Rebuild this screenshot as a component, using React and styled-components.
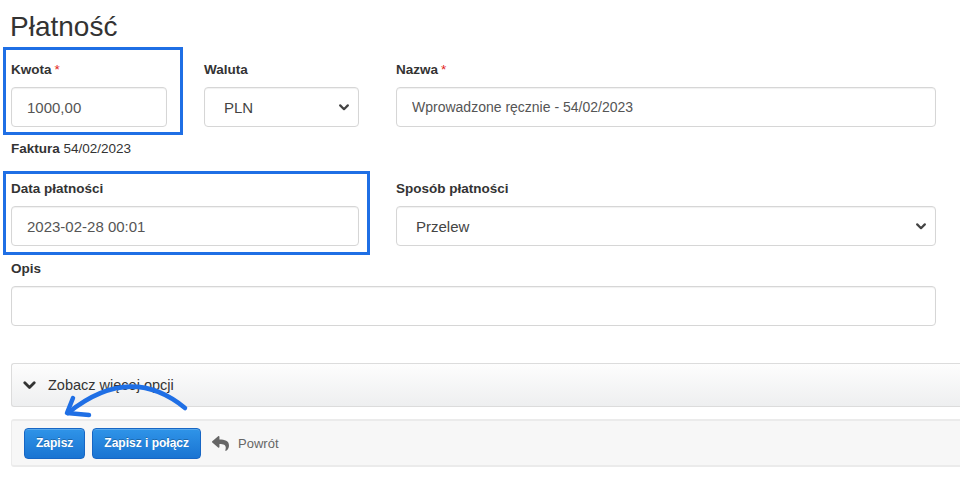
import React from "react";
import styled, { createGlobalStyle } from "styled-components";
import { FaReply } from "react-icons/fa";

const GlobalStyle = createGlobalStyle`
  html, body { margin: 0; padding: 0; background: #fff; overflow: hidden; }
  body { font-family: "Liberation Sans", Arial, sans-serif; color: #333; }
  * { box-sizing: border-box; }
`;

const chevron = (color) =>
  `url("data:image/svg+xml,%3Csvg xmlns='http://www.w3.org/2000/svg' width='10' height='7' viewBox='0 0 10 7'%3E%3Cpath d='M1.2 1.4 L5 5.2 L8.8 1.4' fill='none' stroke='${color}' stroke-width='2.2' stroke-linecap='round' stroke-linejoin='round'/%3E%3C/svg%3E")`;

const Page = styled.div`
  position: relative;
  width: 960px;
  height: 491px;
  padding: 11px 0 0 11px;
`;

const Title = styled.h1`
  margin: 0 0 19px -1px;
  font-size: 28px;
  line-height: 31px;
  font-weight: normal;
  color: #333;
`;

const FormGrid = styled.div`
  display: grid;
  grid-template-columns: 156px 155px 1fr;
  column-gap: 37px;
  margin-right: 24px;
`;

const Group = styled.div`
  grid-column: span ${(p) => p.$span || 1};
  margin-bottom: ${(p) => (p.$last ? 0 : 14)}px;
`;

const FieldBox = styled.div`
  position: relative;
`;

const Label = styled.label`
  display: block;
  font-size: 13.5px;
  line-height: 18px;
  font-weight: bold;
  color: #333;
  margin-bottom: 8px;
`;

const Req = styled.span`
  color: #e2231a;
  font-weight: normal;
  margin-left: 3px;
`;

const Input = styled.input`
  display: block;
  width: 100%;
  height: 40px;
  border: 1px solid #d6d6d6;
  border-radius: 4px;
  padding: 0 15px;
  font-family: "Liberation Sans", Arial, sans-serif;
  font-size: ${(p) => p.$size || 15}px;
  color: #555;
  background: #fff;
  box-shadow: inset 0 1px 1px rgba(0, 0, 0, 0.06);
  outline: none;
`;

const Select = styled.select`
  display: block;
  width: 100%;
  height: 40px;
  border: 1px solid #d6d6d6;
  border-radius: 4px;
  padding: 0 24px 0 19px;
  font-family: "Liberation Sans", Arial, sans-serif;
  font-size: 15px;
  color: #444;
  background: #fff ${chevron("%23444")} no-repeat right 9px center;
  appearance: none;
  -webkit-appearance: none;
  box-shadow: inset 0 1px 1px rgba(0, 0, 0, 0.06);
  outline: none;
`;

const Help = styled.div`
  margin: 13px 0 8px;
  font-size: 13.5px;
  line-height: 18px;
  color: #333;
  b { font-weight: bold; }
`;

const Highlight = styled.div`
  position: absolute;
  top: ${(p) => p.$t}px;
  left: ${(p) => p.$l}px;
  right: ${(p) => p.$r}px;
  bottom: ${(p) => p.$b}px;
  border: 3px solid #1f6fe5;
  pointer-events: none;
`;

const Collapse = styled.div`
  margin-top: 37px;
  height: 44px;
  display: flex;
  align-items: center;
  gap: 12px;
  padding-left: 11px;
  border: 1px solid #dcdcdc;
  border-right: none;
  border-radius: 3px 0 0 3px;
  background: linear-gradient(#fdfdfd, #eeeff0);
  font-size: 14.5px;
  color: #333;
`;

const Footer = styled.div`
  margin-top: 12px;
  height: 48px;
  display: flex;
  align-items: center;
  gap: 7px;
  padding-left: 12px;
  border-top: 2px solid #ebebeb;
  border-bottom: 2px solid #ebebeb;
  border-left: 1px solid #ebebeb;
  border-radius: 3px 0 0 3px;
  background: #f7f7f7;
`;

const Button = styled.button`
  height: 31px;
  padding: 0 11px;
  border: 1px solid #1766c4;
  border-radius: 4px;
  background: linear-gradient(#2f94e8, #1a74d2);
  color: #fff;
  font-family: "Liberation Sans", Arial, sans-serif;
  font-size: 12px;
  font-weight: bold;
  text-shadow: 0 -1px 0 rgba(0, 0, 0, 0.25);
  box-shadow: inset 0 1px 0 rgba(255, 255, 255, 0.2);
`;

const BackLink = styled.span`
  display: inline-flex;
  align-items: center;
  gap: 9px;
  margin-left: 4px;
  font-size: 13px;
  color: #666;
  svg { color: #666; }
`;

const ArrowSvg = styled.svg`
  position: absolute;
  left: 60px;
  top: 380px;
  overflow: visible;
  pointer-events: none;
`;

function ChevronDown() {
  return (
    <svg width="13" height="9" viewBox="0 0 13 9">
      <path d="M1.8 1.8 L6.5 6.5 L11.2 1.8" fill="none" stroke="#333" strokeWidth="2.8" strokeLinecap="round" strokeLinejoin="round" />
    </svg>
  );
}

export default function App() {
  return (
    <Page>
      <GlobalStyle />
      <Title>Płatność</Title>
      <FormGrid>
        <Group>
          <FieldBox>
            <Highlight $t={-14} $l={-8} $r={-16} $b={-8} />
            <Label>Kwota<Req>*</Req></Label>
            <Input defaultValue="1000,00" />
          </FieldBox>
          <Help><b>Faktura</b> 54/02/2023</Help>
        </Group>
        <Group>
          <Label>Waluta</Label>
          <Select defaultValue="PLN"><option>PLN</option></Select>
        </Group>
        <Group>
          <Label>Nazwa<Req>*</Req></Label>
          <Input $size={14} defaultValue="Wprowadzone ręcznie - 54/02/2023" />
        </Group>
        <Group $span={2}>
          <FieldBox>
            <Highlight $t={-9} $l={-8} $r={-11} $b={-9} />
            <Label>Data płatności</Label>
            <Input defaultValue="2023-02-28 00:01" />
          </FieldBox>
        </Group>
        <Group>
          <Label>Sposób płatności</Label>
          <Select defaultValue="Przelew"><option>Przelew</option></Select>
        </Group>
        <Group $span={3} $last>
          <Label>Opis</Label>
          <Input />
        </Group>
      </FormGrid>
      <Collapse>
        <ChevronDown />
        <span>Zobacz więcej opcji</span>
      </Collapse>
      <Footer>
        <Button>Zapisz</Button>
        <Button>Zapisz i połącz</Button>
        <BackLink><FaReply size={17} />Powrót</BackLink>
      </Footer>
      <ArrowSvg width="135" height="42" viewBox="0 0 135 42">
        <g fill="none" stroke="#1f6fe5" strokeWidth="4.5" strokeLinecap="round" strokeLinejoin="round">
          <path d="M125 28 Q70 -17 8 33" />
          <path d="M13 18 L7 33 L29 35" />
        </g>
      </ArrowSvg>
    </Page>
  );
}
